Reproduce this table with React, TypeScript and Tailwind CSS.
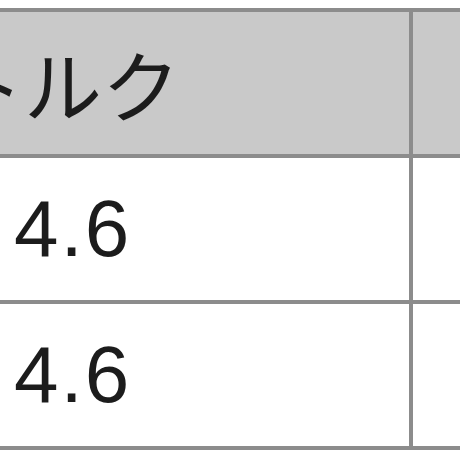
import React from "react";

export default function App() {
  const rows = ["4.6", "4.6"];
  return (
    <div className="w-[460px] h-[460px] overflow-hidden bg-white pt-[8px]">
      <div className="grid grid-cols-[409px_1fr] grid-rows-[142px_142px_142px] gap-[4px] bg-[#8c8c8c] py-[4px] w-[520px]">
        <div className="bg-[#c9c9c9] flex items-center overflow-hidden">
          <span
            className="ml-[-54px] whitespace-nowrap text-[78px] leading-none text-[#1c1c1c]"
            style={{ fontFamily: '"Noto Sans CJK JP", sans-serif' }}
          >
            トルク
          </span>
        </div>
        <div className="bg-[#c9c9c9]" />
        {rows.map((v, i) => (
          <React.Fragment key={i}>
            <div className="bg-white flex items-center pl-[14px]">
              <span
                className="text-[80px] leading-none tracking-[2px] text-[#1c1c1c]"
                style={{ fontFamily: '"Liberation Sans", Arial, sans-serif' }}
              >
                {v}
              </span>
            </div>
            <div className="bg-white" />
          </React.Fragment>
        ))}
      </div>
    </div>
  );
}
